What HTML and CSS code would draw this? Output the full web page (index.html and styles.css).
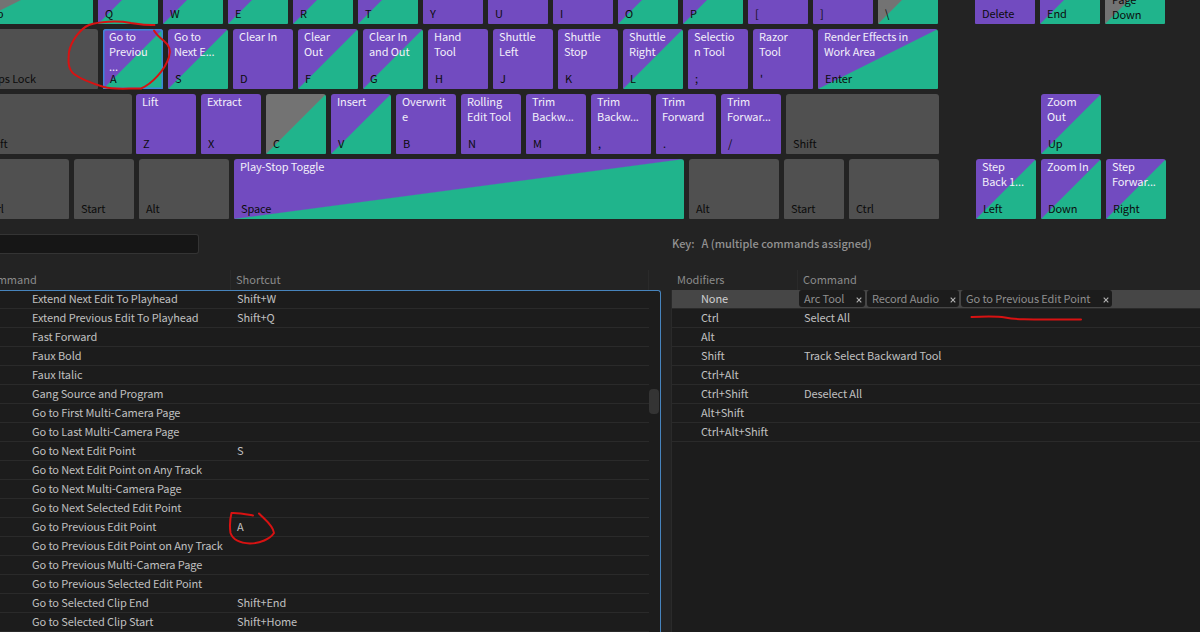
FILE: index.html
```
<!DOCTYPE html>
<html lang="en">
<head>
<meta charset="utf-8">
<title>Keyboard Shortcuts</title>
<link rel="stylesheet" href="styles.css">
</head>
<body>
<main class="dialog">
  <section class="keyboard">
    <div class="row">
      <div class="key mod-tab gray-split"><span class="cap">Tab</span></div>
      <div class="key split"><span class="cap">Q</span></div>
      <div class="key split"><span class="cap">W</span></div>
      <div class="key split"><span class="cap">E</span></div>
      <div class="key split"><span class="cap">R</span></div>
      <div class="key split"><span class="cap">T</span></div>
      <div class="key app"><span class="cap">Y</span></div>
      <div class="key app"><span class="cap">U</span></div>
      <div class="key app"><span class="cap">I</span></div>
      <div class="key split"><span class="cap">O</span></div>
      <div class="key split"><span class="cap">P</span></div>
      <div class="key app"><span class="cap">[</span></div>
      <div class="key app"><span class="cap">]</span></div>
      <div class="key gray-split"><span class="cap">\</span></div>
      <div class="key app nav-start"><span class="cap">Delete</span></div>
      <div class="key split"><span class="cap">End</span></div>
      <div class="key gray-split"><span class="cap two-line">Page Down</span></div>
    </div>
    <div class="row">
      <div class="key mod mod-caps"><span class="cap">Caps Lock</span></div>
      <div class="key split selected"><span class="cmd">Go to<br>Previou<br>...</span><span class="cap">A</span></div>
      <div class="key split"><span class="cmd">Go to<br>Next E...</span><span class="cap">S</span></div>
      <div class="key app"><span class="cmd">Clear In</span><span class="cap">D</span></div>
      <div class="key split"><span class="cmd">Clear<br>Out</span><span class="cap">F</span></div>
      <div class="key split"><span class="cmd">Clear In<br>and Out</span><span class="cap">G</span></div>
      <div class="key app"><span class="cmd">Hand<br>Tool</span><span class="cap">H</span></div>
      <div class="key app"><span class="cmd">Shuttle<br>Left</span><span class="cap">J</span></div>
      <div class="key app"><span class="cmd">Shuttle<br>Stop</span><span class="cap">K</span></div>
      <div class="key split"><span class="cmd">Shuttle<br>Right</span><span class="cap">L</span></div>
      <div class="key app"><span class="cmd">Selectio<br>n Tool</span><span class="cap">;</span></div>
      <div class="key app"><span class="cmd">Razor<br>Tool</span><span class="cap">'</span></div>
      <div class="key split enter"><span class="cmd">Render Effects in<br>Work Area</span><span class="cap">Enter</span></div>
    </div>
    <div class="row">
      <div class="key mod mod-shift"><span class="cap">Shift</span></div>
      <div class="key app"><span class="cmd">Lift</span><span class="cap">Z</span></div>
      <div class="key app"><span class="cmd">Extract</span><span class="cap">X</span></div>
      <div class="key gray-split"><span class="cap">C</span></div>
      <div class="key split"><span class="cmd">Insert</span><span class="cap">V</span></div>
      <div class="key app"><span class="cmd">Overwrit<br>e</span><span class="cap">B</span></div>
      <div class="key app"><span class="cmd">Rolling<br>Edit Tool</span><span class="cap">N</span></div>
      <div class="key app"><span class="cmd">Trim<br>Backw...</span><span class="cap">M</span></div>
      <div class="key app"><span class="cmd">Trim<br>Backw...</span><span class="cap">,</span></div>
      <div class="key app"><span class="cmd">Trim<br>Forward</span><span class="cap">.</span></div>
      <div class="key app"><span class="cmd">Trim<br>Forwar...</span><span class="cap">/</span></div>
      <div class="key mod right-shift"><span class="cap">Shift</span></div>
      <div class="key split nav-up"><span class="cmd">Zoom<br>Out</span><span class="cap">Up</span></div>
    </div>
    <div class="row">
      <div class="key mod mod-ctrl"><span class="cap">Ctrl</span></div>
      <div class="key mod"><span class="cap">Start</span></div>
      <div class="key mod wide"><span class="cap">Alt</span></div>
      <div class="key split space"><span class="cmd">Play-Stop Toggle</span><span class="cap">Space</span></div>
      <div class="key mod wide"><span class="cap">Alt</span></div>
      <div class="key mod"><span class="cap">Start</span></div>
      <div class="key mod wide"><span class="cap">Ctrl</span></div>
      <div class="key split nav-start"><span class="cmd">Step<br>Back 1...</span><span class="cap">Left</span></div>
      <div class="key split"><span class="cmd">Zoom In</span><span class="cap">Down</span></div>
      <div class="key split"><span class="cmd">Step<br>Forwar...</span><span class="cap">Right</span></div>
    </div>
  </section>

  <div class="panels">
    <section class="commands">
      <div class="toolbar"><div class="search"></div></div>
      <div class="head"><span class="head-name">Command</span><span class="head-shortcut">Shortcut</span></div>
      <div class="list">
        <div class="item"><span class="name">Extend Next Edit To Playhead</span><span>Shift+W</span></div>
        <div class="item"><span class="name">Extend Previous Edit To Playhead</span><span>Shift+Q</span></div>
        <div class="item"><span class="name">Fast Forward</span></div>
        <div class="item"><span class="name">Faux Bold</span></div>
        <div class="item"><span class="name">Faux Italic</span></div>
        <div class="item"><span class="name">Gang Source and Program</span></div>
        <div class="item"><span class="name">Go to First Multi-Camera Page</span></div>
        <div class="item"><span class="name">Go to Last Multi-Camera Page</span></div>
        <div class="item"><span class="name">Go to Next Edit Point</span><span>S</span></div>
        <div class="item"><span class="name">Go to Next Edit Point on Any Track</span></div>
        <div class="item"><span class="name">Go to Next Multi-Camera Page</span></div>
        <div class="item"><span class="name">Go to Next Selected Edit Point</span></div>
        <div class="item"><span class="name">Go to Previous Edit Point</span><span>A</span></div>
        <div class="item"><span class="name">Go to Previous Edit Point on Any Track</span></div>
        <div class="item"><span class="name">Go to Previous Multi-Camera Page</span></div>
        <div class="item"><span class="name">Go to Previous Selected Edit Point</span></div>
        <div class="item"><span class="name">Go to Selected Clip End</span><span>Shift+End</span></div>
        <div class="item"><span class="name">Go to Selected Clip Start</span><span>Shift+Home</span></div>
        <div class="scroll-thumb"></div>
      </div>
    </section>
    <section class="modifiers">
      <div class="toolbar key-title"><span>Key:</span><span>A (multiple commands assigned)</span></div>
      <div class="head"><span class="head-mod">Modifiers</span><span class="head-cmd">Command</span></div>
      <div class="mod-list">
        <div class="item active"><span class="mod-name">None</span>
          <div class="chips">
            <div class="chip chip-arc"><span>Arc Tool</span><svg class="close" viewBox="0 0 6 6"><path d="M.7 .7 5.3 5.3M5.3 .7 .7 5.3"/></svg></div>
            <div class="chip chip-audio"><span>Record Audio</span><svg class="close" viewBox="0 0 6 6"><path d="M.7 .7 5.3 5.3M5.3 .7 .7 5.3"/></svg></div>
            <div class="chip chip-edit"><span>Go to Previous Edit Point</span><svg class="close" viewBox="0 0 6 6"><path d="M.7 .7 5.3 5.3M5.3 .7 .7 5.3"/></svg></div>
          </div>
        </div>
        <div class="item"><span class="mod-name">Ctrl</span><span>Select All</span></div>
        <div class="item"><span class="mod-name">Alt</span></div>
        <div class="item"><span class="mod-name">Shift</span><span>Track Select Backward Tool</span></div>
        <div class="item"><span class="mod-name">Ctrl+Alt</span></div>
        <div class="item"><span class="mod-name">Ctrl+Shift</span><span>Deselect All</span></div>
        <div class="item"><span class="mod-name">Alt+Shift</span></div>
        <div class="item"><span class="mod-name">Ctrl+Alt+Shift</span></div>
      </div>
    </section>
  </div>

  <svg class="ink" viewBox="0 0 1200 632">
    <path d="M154.500 25 C145 25.500 138 24 131 23 C117 20.500 99 21.500 89 25 C80 29 71 41 69 52 C68 62 68 69 74 74 C82 80 94 84 104 87 C115 90 130 88 141 88.500 C152 84 165 70 169 57 C171 51 169 45 164 41 C159 37 156 34 154 30.500"/>
    <path d="M253 515.500 C245 514 238 512.500 231.500 513 C230 519 229.500 526 230.500 533 C233 540 240 543 250 543.500 C260 543.500 270 539 274 533 C273 525 264 519 259 513.500"/>
    <path d="M971.500 317 C984 316.500 996 316 1005 317.500 C1018 320 1030 319.500 1081 319.500"/>
  </svg>
</main>
</body>
</html>
```
FILE: styles.css
```
* { box-sizing: border-box; }

body {
  margin: 0;
  background: #232323;
  color: #c0c0c0;
  font-family: "Noto Sans CJK SC", "Noto Sans", sans-serif;
  font-size: 11px;
  letter-spacing: -0.1px;
  line-height: 15px;
  overflow: hidden;
}

.dialog {
  position: relative;
  width: 1200px;
  height: 632px;
  overflow: hidden;
}

/* Keyboard map */
.keyboard {
  display: flex;
  flex-direction: column;
  gap: 5px;
  margin: -36px 0 0 -27px;
  width: 1227px;
}

.row { display: flex; gap: 5px; height: 60px; }

.key {
  flex: none;
  display: flex;
  flex-direction: column;
  width: 60px;
  height: 60px;
  padding: 0 0 5px 6px;
  border-radius: 3px 3px 1px 1px;
  white-space: nowrap;
}

.app { background: #724bc0; }
.split { background: linear-gradient(to bottom right, #724bc0 49.500%, #20b48c 50.500%); }
.gray-split { background: linear-gradient(to bottom right, #737373 49.500%, #20b48c 50.500%); }
.mod { background: #505050; }
.selected { box-shadow: inset 0 0 0 1.500px #3c87d8; }

.cmd { color: #f3effa; height: 44px; }
.cap { color: #0c0c0c; margin-top: auto; padding-left: 1px; line-height: 11px; }
.cap.two-line { white-space: normal; width: 40px; line-height: 15px; margin-bottom: -3px; }

.mod-tab { width: 120px; padding-left: 11px; }
.mod-caps { width: 125px; padding-left: 11px; }
.mod-shift { width: 159px; margin-right: -1px; padding-left: 10px; }
.mod-ctrl { width: 96px; padding-left: 12px; }
.wide { width: 90px; }
.space { width: 450px; }
.enter { width: 120px; }
.right-shift { width: 153px; }
.nav-start { margin-left: 32px; }
.nav-up { margin-left: 97px; }

/* Lower panels */
.panels { display: flex; height: 413px; padding-top: 15px; }
.commands { width: 661px; }
.modifiers { flex: 1; margin-left: 10px; }
.toolbar { height: 36px; }

.search {
  width: 199px;
  height: 20px;
  border: 1px solid #343434;
  border-left: 0;
  border-radius: 0 3px 3px 0;
  background: #161616;
}

.head { display: flex; height: 20px; line-height: 18px; color: #8b8b8b; letter-spacing: 0; }
.head-name { width: 230px; margin-left: -17px; }
.head-name + .head-shortcut { margin-left: 17px; }
.head-shortcut { width: 419px; border-left: 1px solid #2a2a2a; border-right: 1px solid #2a2a2a; padding-left: 5px; }

.commands .list {
  position: relative;
  height: 360px;
  border-top: 1px solid #4784bd;
  border-right: 1px solid #4784bd;
  border-radius: 0 3px 0 0;
  background: #1c1c1c;
}

.item {
  display: flex;
  height: 19px;
  line-height: 16px;
  border-bottom: 1px solid #2a2a2a;
  white-space: nowrap;
}

.list .item { width: 649px; height: 19px; padding-left: 32px; }
.list .item:first-child { height: 18px; line-height: 14px; }
.name { width: 205px; }

.scroll-thumb {
  position: absolute;
  top: 98px;
  right: 1px;
  width: 10px;
  height: 25px;
  border-radius: 4px;
  background: #343434;
}

.key-title { display: flex; gap: 7px; padding: 2px 0 0 1px; font-weight: 500; letter-spacing: -0.04px; color: #929292; }
.head-mod { width: 126px; padding-left: 6px; }
.head-cmd { padding-left: 5px; border-left: 1px solid #2a2a2a; }

.mod-list { height: 342px; border-left: 1px solid #2a2a2a; background: #1c1c1c; }
.mod-name { width: 132px; padding-left: 29px; }
.active { background: #464646; color: #d0d0d0; }
.active .mod-name { width: 127px; }

.chips { display: flex; gap: 2px; }
.chip {
  display: flex;
  justify-content: space-between;
  height: 17px;
  padding: 0 3px 0 5px;
  border-radius: 3px;
  background: #1c1c1c;
  color: #8f8f8f;
}
.chip-arc { width: 66px; }
.chip-audio { width: 92px; }
.chip-edit { width: 151px; }
.close { width: 6px; height: 6px; margin-top: 7px; fill: none; stroke: #b4b4b4; stroke-width: 1.100; }

/* Red pen annotations */
.ink {
  position: absolute;
  inset: 0;
  width: 1200px;
  height: 632px;
  fill: none;
  stroke: #d81212;
  stroke-width: 2;
  stroke-linecap: round;
  stroke-linejoin: round;
  pointer-events: none;
}
```
